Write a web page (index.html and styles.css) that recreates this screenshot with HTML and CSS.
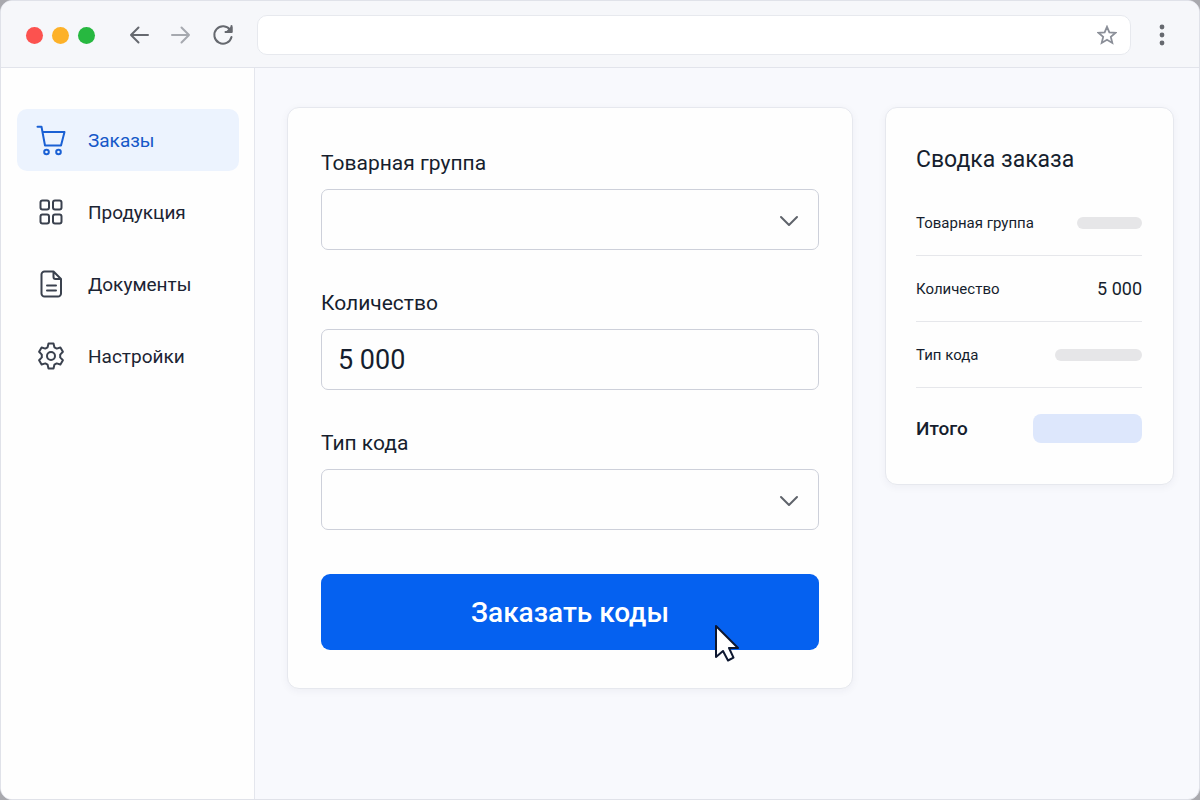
FILE: index.html
```html
<!DOCTYPE html>
<html lang="ru">
<head>
<meta charset="utf-8">
<meta name="viewport" content="width=device-width, initial-scale=1">
<title>Заказы</title>
<link rel="stylesheet" href="styles.css">
</head>
<body>
<div class="window">
  <header class="toolbar">
    <div class="lights" aria-hidden="true">
      <span class="light light-red"></span>
      <span class="light light-yellow"></span>
      <span class="light light-green"></span>
    </div>
    <div class="history">
      <button class="tool" type="button" aria-label="Назад">
        <svg class="tool-icon" viewBox="0 0 24 24"><path d="M21 12H4M11.500 4.500 4 12l7.500 7.500"/></svg>
      </button>
      <button class="tool tool-faded" type="button" aria-label="Вперёд">
        <svg class="tool-icon" viewBox="0 0 24 24"><path d="M3 12h17M12.500 4.500 20 12l-7.500 7.500"/></svg>
      </button>
      <button class="tool" type="button" aria-label="Обновить">
        <svg class="tool-icon" viewBox="0 0 24 24"><path d="M20.500 14A8.700 8.700 0 1 1 19.300 7.200M20.500 3v6h-6"/><path class="solid" d="M20.500 4.500V9H16z"/></svg>
      </button>
    </div>
    <div class="address">
      <input class="address-input" type="text" aria-label="Адрес">
      <button class="tool tool-star" type="button" aria-label="В закладки">
        <svg class="star-icon" viewBox="0 0 22 22"><path d="M11 2l2.600 6.200 6.700.5-5.100 4.400 1.600 6.600L11 16.200l-5.800 3.500 1.600-6.600L1.700 8.700l6.700-.5z"/></svg>
      </button>
    </div>
    <button class="tool" type="button" aria-label="Меню">
      <svg class="tool-icon dots" viewBox="0 0 24 24"><circle cx="12" cy="4" r="2.400"/><circle cx="12" cy="12" r="2.400"/><circle cx="12" cy="20" r="2.400"/></svg>
    </button>
  </header>
  <div class="body">
    <nav class="sidebar">
      <a class="nav-item active" href="#">
        <svg class="nav-icon" viewBox="0 0 28 28"><path d="M.5 .7H4.500L8 19.500h16L27.500 6H5.500"/><circle cx="9.500" cy="26" r="2.300"/><circle cx="21.500" cy="26" r="2.300"/></svg>
        <span>Заказы</span>
      </a>
      <a class="nav-item" href="#">
        <svg class="nav-icon" viewBox="0 0 28 28"><rect x="3.500" y="2.500" width="8.500" height="9" rx="2"/><rect x="16" y="2.500" width="8.500" height="9" rx="2"/><rect x="3.500" y="16.500" width="8.500" height="9" rx="2"/><rect x="16" y="16.500" width="8.500" height="9" rx="2"/></svg>
        <span>Продукция</span>
      </a>
      <a class="nav-item" href="#">
        <svg class="nav-icon" viewBox="0 0 28 28"><path d="M16.500 1.500h-9a3 3 0 0 0-3 3v19a3 3 0 0 0 3 3h13.500a3 3 0 0 0 3-3V9zV7a2 2 0 0 0 2 2H24M10 15.500h9M10 20.500h9"/></svg>
        <span>Документы</span>
      </a>
      <a class="nav-item" href="#">
        <svg class="nav-icon" viewBox="0 0 28 28"><path d="M11.500 1.500h5l.9 3.800 2.300 1.300 3.700-1.100 2.500 4.300-2.700 2.800v2.800l2.700 2.800-2.500 4.300-3.700-1.100-2.300 1.300-.9 3.800h-5l-.9-3.800-2.300-1.300-3.700 1.100-2.500-4.300 2.700-2.800v-2.800L2.100 9.800l2.500-4.300 3.700 1.100 2.300-1.300z"/><circle cx="14" cy="14" r="4"/></svg>
        <span>Настройки</span>
      </a>
    </nav>
    <main class="content">
      <form class="card order">
        <div class="field">
          <label class="label" for="group">Товарная группа</label>
          <div class="select-box">
            <select class="control" id="group"><option></option></select>
            <svg class="chevron" viewBox="0 0 20 12"><path d="M2 2l8 8 8-8"/></svg>
          </div>
        </div>
        <div class="field">
          <label class="label" for="count">Количество</label>
          <input class="control" id="count" type="text" value="5 000">
        </div>
        <div class="field">
          <label class="label" for="type">Тип кода</label>
          <div class="select-box">
            <select class="control" id="type"><option></option></select>
            <svg class="chevron" viewBox="0 0 20 12"><path d="M2 2l8 8 8-8"/></svg>
          </div>
        </div>
        <div class="submit-box">
          <button class="submit" type="button">Заказать коды</button>
          <svg class="pointer" viewBox="0 0 26 38"><path d="M2 2v31l7-6 5 9.500 5.500-2.800-4.500-9.700H24z"/></svg>
        </div>
      </form>
      <aside class="card summary">
        <h2 class="summary-title">Сводка заказа</h2>
        <dl class="rows">
          <div class="row"><dt>Товарная группа</dt><dd class="bar bar-short"></dd></div>
          <div class="row"><dt>Количество</dt><dd class="value">5 000</dd></div>
          <div class="row"><dt>Тип кода</dt><dd class="bar bar-long"></dd></div>
          <div class="row total"><dt>Итого</dt><dd class="pill"></dd></div>
        </dl>
      </aside>
    </main>
  </div>
</div>
</body>
</html>
```
FILE: styles.css
```css
* {
  box-sizing: border-box;
}

body {
  margin: 0;
  background: #a9a9ae;
  color: #161e2e;
  font-family: Roboto, "Liberation Sans", sans-serif;
}

button,
input,
select {
  font: inherit;
  color: inherit;
}

svg {
  display: block;
  fill: none;
  stroke: currentColor;
  stroke-linecap: round;
  stroke-linejoin: round;
}

.window {
  display: flex;
  flex-direction: column;
  min-height: 100vh;
  border: 1px solid #e0e2e9;
  border-radius: 12px;
  background: #f8f9fd;
  overflow: hidden;
}

.toolbar {
  display: flex;
  align-items: center;
  height: 67px;
  padding: 2px 25px 0;
  border-bottom: 1px solid #e2e4eb;
  background: #f6f7fa;
}

.lights {
  display: flex;
  gap: 9px;
}

.light {
  width: 17px;
  height: 17px;
  border-radius: 50%;
}

.light-red {
  background: #fc524f;
}

.light-yellow {
  background: #fdb128;
}

.light-green {
  background: #27b840;
}

.history {
  display: flex;
  gap: 18px;
  margin: 0 22px 0 32px;
}

.tool {
  padding: 0;
  border: 0;
  background: none;
  color: #66696f;
}

.tool-faded {
  color: #a6a9af;
}

.tool-icon {
  width: 24px;
  height: 24px;
  stroke-width: 2;
}

.solid {
  fill: currentColor;
}

.dots {
  fill: currentColor;
  stroke: none;
}

.address {
  display: flex;
  flex: 1;
  align-items: center;
  height: 40px;
  margin-right: 19px;
  padding-right: 13px;
  border: 1px solid #e7e9ee;
  border-radius: 10px;
  background: #fff;
}

.address-input {
  flex: 1;
  min-width: 0;
  height: 100%;
  border: 0;
  outline: 0;
  background: none;
}

.tool-star {
  color: #8b8f98;
}

.star-icon {
  width: 20px;
  height: 20px;
  stroke-width: 2;
  stroke-linejoin: miter;
}

.body {
  display: flex;
  flex: 1;
}

.sidebar {
  display: flex;
  flex: none;
  flex-direction: column;
  gap: 10px;
  width: 254px;
  padding: 41px 15px 24px 16px;
  border-right: 1px solid #e4e6ed;
  background: #fefefe;
}

.nav-item {
  display: flex;
  align-items: center;
  gap: 23px;
  height: 62px;
  padding: 0 20px;
  border-radius: 10px;
  color: #1c2433;
  font-size: 19px;
  text-decoration: none;
}

.active {
  background: #ecf3fe;
  color: #1558c8;
}

.nav-icon {
  width: 28px;
  height: 28px;
  color: #3a414e;
  stroke-width: 2;
  overflow: visible;
}

.active .nav-icon {
  color: #1a60d4;
}

.content {
  display: flex;
  flex: 1;
  align-items: flex-start;
  gap: 32px;
  padding: 39px 25px 32px 32px;
}

.card {
  border: 1px solid #e6e8ee;
  border-radius: 12px;
  background: #fefefe;
  box-shadow: 0 2px 8px rgba(30, 40, 80, 0.05);
}

.order {
  flex: 1;
  padding: 41px 33px 38px;
}

.field {
  margin-bottom: 39px;
}

.label {
  display: block;
  margin-bottom: 12px;
  font-size: 21px;
  line-height: 28px;
}

.select-box,
.submit-box {
  position: relative;
}

.control {
  display: block;
  width: 100%;
  height: 61px;
  padding: 0 16px;
  border: 1px solid #cdd0da;
  border-radius: 7px;
  background: #fefefe;
  font-size: 27px;
  appearance: none;
}

.chevron {
  position: absolute;
  top: 26px;
  right: 20px;
  width: 20px;
  height: 12px;
  color: #5f636b;
  stroke-width: 2;
  pointer-events: none;
}

.submit-box {
  margin-top: 44px;
}

.submit {
  display: block;
  width: 100%;
  height: 76px;
  border: 0;
  border-radius: 9px;
  background: #0561f0;
  color: #fff;
  font-size: 28px;
  font-weight: 500;
}

.pointer {
  position: absolute;
  top: 50px;
  right: 79px;
  width: 26px;
  height: 38px;
  fill: #fff;
  stroke: #0d1730;
  stroke-width: 2;
}

.summary {
  flex: none;
  width: 289px;
  padding: 36px 31px 41px 30px;
}

.summary-title {
  margin: 0 0 14px;
  font-size: 23px;
  font-weight: 400;
  line-height: 32px;
}

.rows {
  margin: 0;
}

.row {
  display: flex;
  align-items: center;
  justify-content: space-between;
  height: 66px;
  border-bottom: 1px solid #e6e7eb;
  font-size: 15px;
}

.row dd {
  margin: 0;
}

.value {
  font-size: 18px;
}

.bar {
  height: 12px;
  border-radius: 6px;
  background: #e6e6e8;
}

.bar-short {
  width: 65px;
}

.bar-long {
  width: 87px;
}

.total {
  height: auto;
  padding-top: 26px;
  border: 0;
  font-size: 19px;
  font-weight: 500;
}

.pill {
  width: 109px;
  height: 29px;
  border-radius: 8px;
  background: #dde7fc;
}
```
